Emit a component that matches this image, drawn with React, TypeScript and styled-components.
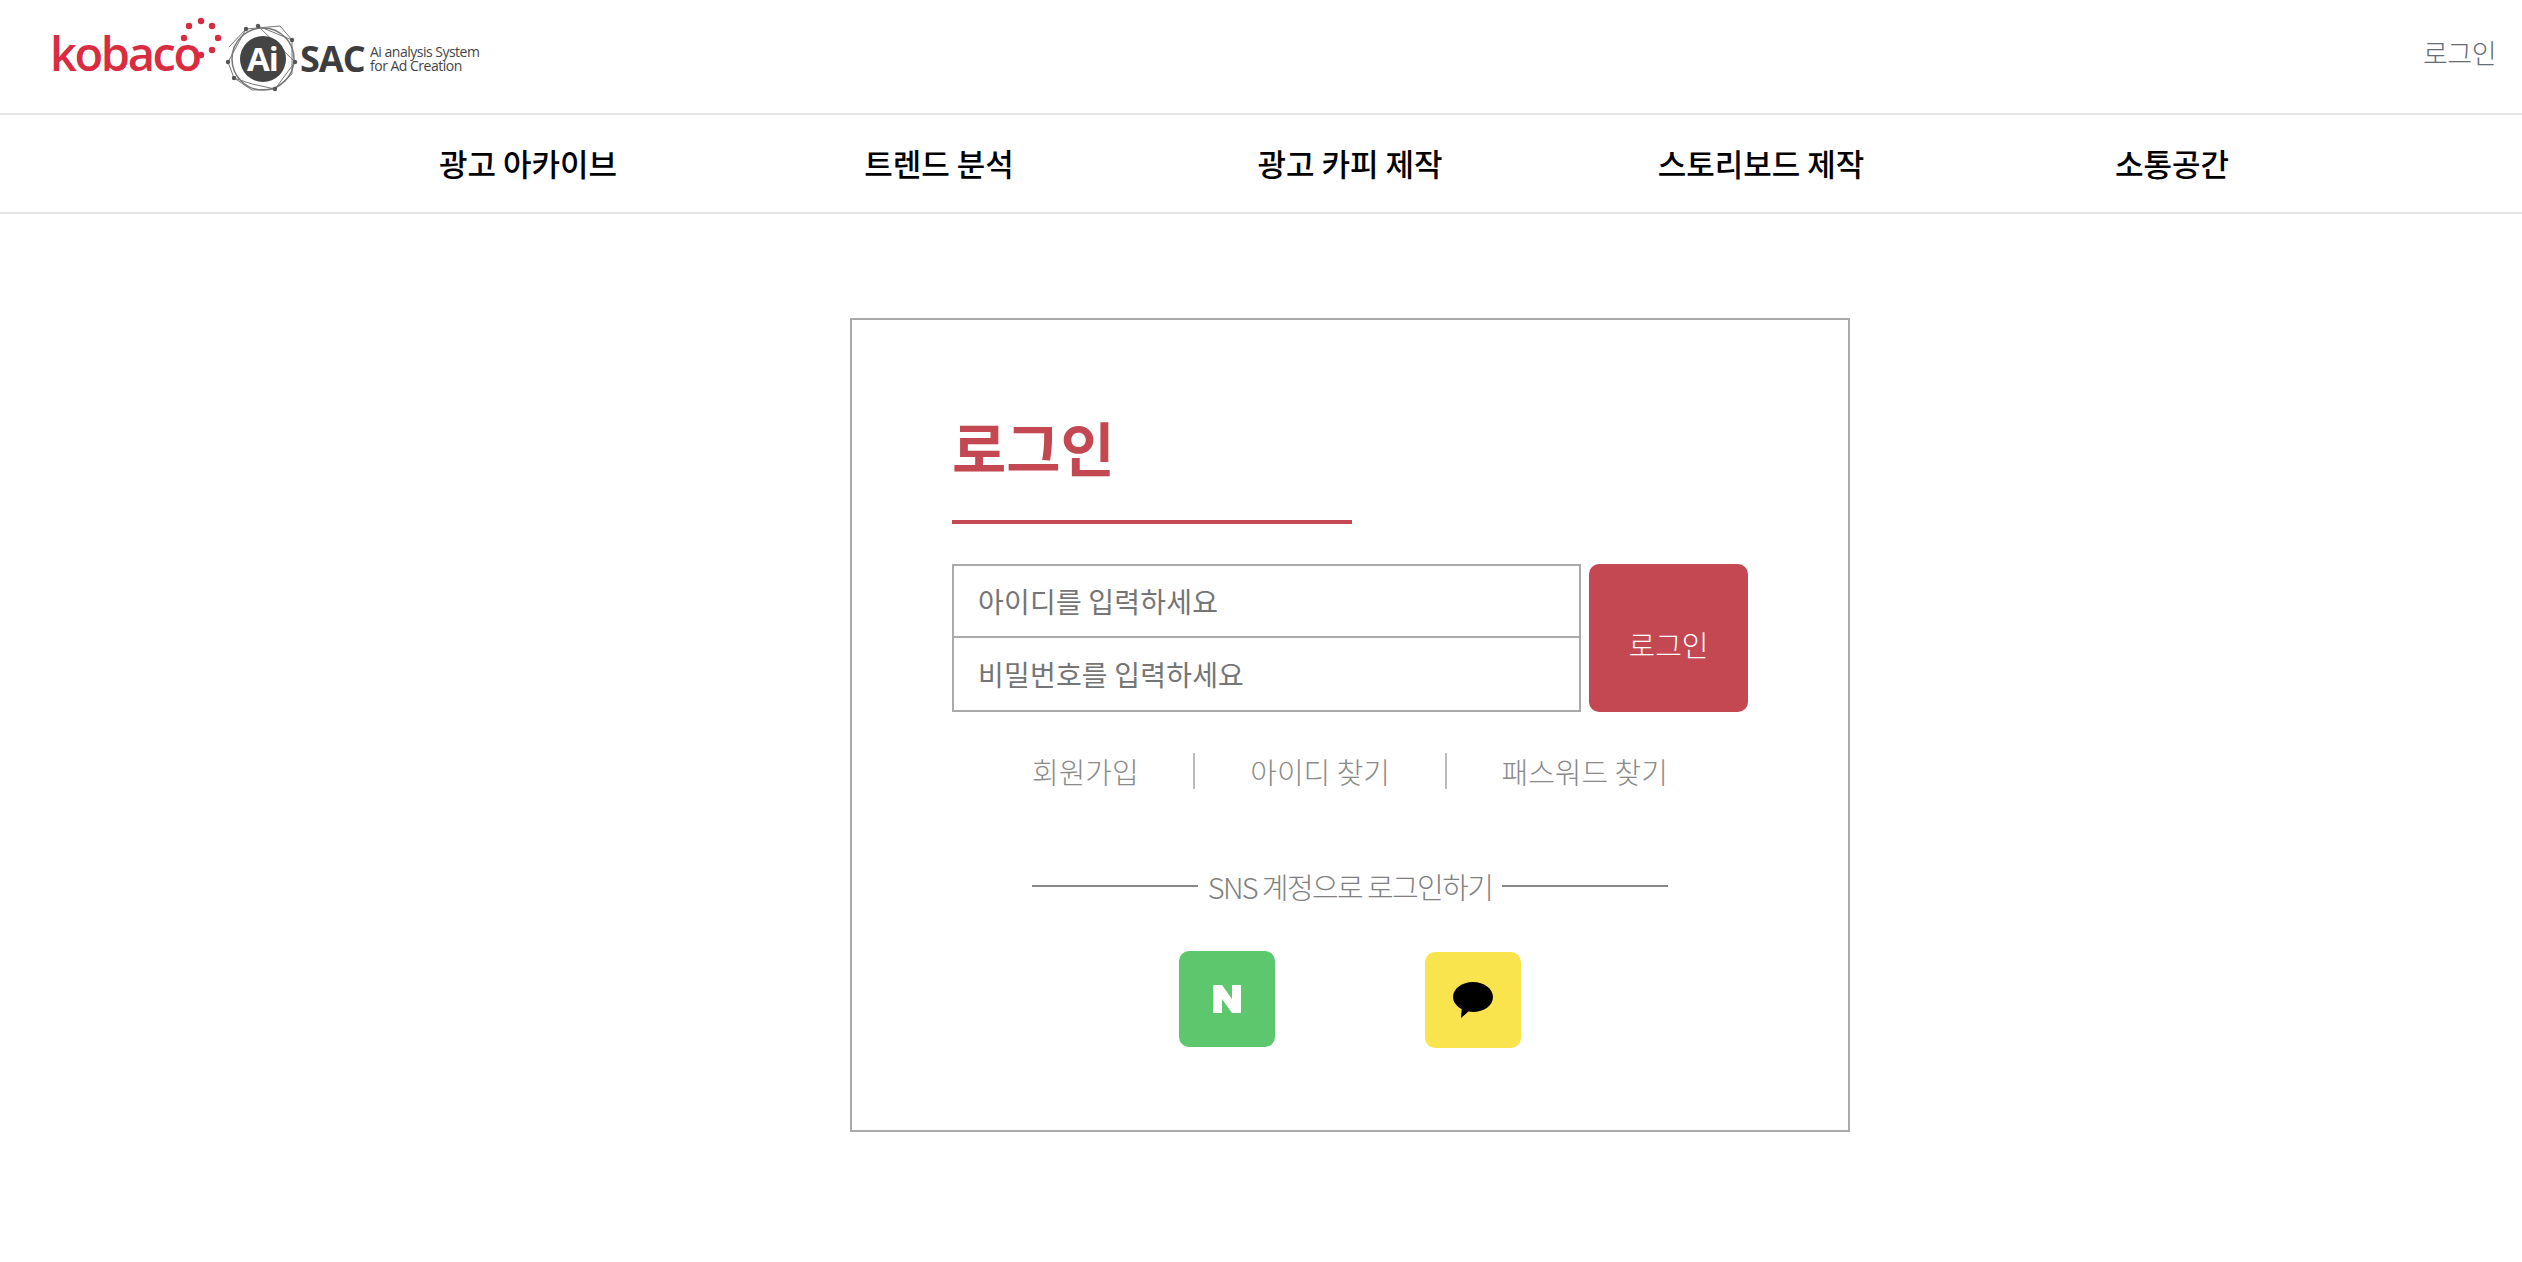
import React from 'react';
import styled, { createGlobalStyle } from 'styled-components';

const GlobalStyle = createGlobalStyle`
  html, body { margin: 0; padding: 0; background: #fff; }
  body { font-family: "Noto Sans CJK KR", "Noto Sans", sans-serif; }
  * { box-sizing: border-box; }
`;

const TopBar = styled.header`
  height: 115px;
  display: flex;
  align-items: center;
  justify-content: space-between;
  padding: 0 26px 0 30px;
  border-bottom: 2px solid #e6e6e6;
`;

const TopLogin = styled.a`
  font-size: 27px;
  font-weight: 300;
  letter-spacing: -0.5px;
  color: #666b76;
  margin-top: -8px;
`;

const Nav = styled.nav`
  height: 99px;
  display: flex;
  justify-content: center;
  padding: 0 0 3px 178px;
  border-bottom: 2px solid #e6e6e6;
`;

const NavList = styled.div`
  width: 2055px;
  display: grid;
  grid-template-columns: repeat(5, 1fr);
  align-items: center;
`;

const NavItem = styled.a`
  text-align: center;
  font-size: 31px;
  font-weight: 500;
  color: #000;
`;

const Main = styled.main`
  display: flex;
  justify-content: center;
  padding: 104px 0 130px 178px;
`;

const Card = styled.section`
  width: 1000px;
  height: 814px;
  border: 2px solid #aaa;
  padding: 0 100px;
`;

const Title = styled.h1`
  width: 400px;
  height: 204px;
  margin: 0;
  padding-top: 85px;
  border-bottom: 4px solid #c34852;
  font-size: 59px;
  line-height: 84px;
  font-weight: 700;
  color: #c34852;
`;

const LoginRow = styled.form`
  margin-top: 40px;
  display: flex;
  gap: 8px;
`;

const Inputs = styled.div`
  width: 629px;
  display: flex;
  flex-direction: column;
  border: 2px solid #aaa;
`;

const TextInput = styled.input<{ $last?: boolean }>`
  height: 72px;
  border: 0;
  border-bottom: ${p => (p.$last ? '0' : '2px solid #aaa')};
  padding: 0 24px;
  font: 400 28px "Noto Sans CJK KR", sans-serif;
  letter-spacing: 0.2px;
  outline: none;
  &::placeholder { color: #757575; opacity: 1; }
`;

const LoginButton = styled.button`
  width: 159px;
  height: 148px;
  border: 0;
  border-radius: 10px;
  background: #c34852;
  color: #fff;
  font: 300 29px "Noto Sans CJK KR", sans-serif;
  padding: 11px 0 0;
`;

const Links = styled.div`
  margin: 38px 0 0 80px;
  width: 636px;
  display: flex;
  align-items: center;
  justify-content: space-between;
  font-size: 29px;
  font-weight: 300;
  color: #8a8a8a;
`;

const Sep = styled.span`
  width: 2px;
  height: 36px;
  background: #bbb;
`;

const SnsRow = styled.div`
  margin: 73px 0 0 80px;
  width: 636px;
  display: flex;
  align-items: center;
  gap: 10px;
  font-size: 29px;
  font-weight: 300;
  letter-spacing: -1.6px;
  color: #808080;
  white-space: nowrap;
  &::before, &::after {
    content: '';
    flex: 1;
    height: 2px;
    background: #888;
  }
`;

const SnsIcons = styled.div`
  margin: 44px 0 0 227px;
  display: flex;
  align-items: flex-start;
  gap: 150px;
`;

const SnsButton = styled.a<{ $bg: string; $drop?: number }>`
  width: 96px;
  height: 96px;
  margin-top: ${p => p.$drop || 0}px;
  border-radius: 10px;
  background: ${p => p.$bg};
  display: flex;
  align-items: center;
  justify-content: center;
`;

const Logo = () => (
  <svg width="470" height="110" viewBox="0 0 470 110">
    <text x="20" y="69" fontFamily="Open Sans, sans-serif" fontWeight="600" fontSize="47" fill="#d92c40" letterSpacing="-2.4">kobaco</text>
    {[[159, 24], [171, 19], [182, 24], [154, 36], [188, 36], [182, 48], [171, 53]].map(([cx, cy]) => (
      <circle key={cx + '-' + cy} cx={cx} cy={cy} r="3.2" fill="#d92c40" />
    ))}
    <circle cx="233" cy="57" r="31" fill="none" stroke="#777" strokeWidth="1.5" />
    <path d="M198 60 L216 27 L199 45 M228 24 L262 38 L250 24 L216 27 M228 24 L265 60 M262 38 L262 72 L245 87 L222 82 L204 76 L198 60 M245 87 L265 60 M204 76 L222 88 L245 87" fill="none" stroke="#777" strokeWidth="1" />
    {[[198, 60], [228, 24], [216, 27], [262, 38], [245, 87], [204, 76], [265, 60]].map(([cx, cy]) => (
      <circle key={cx + '-' + cy} cx={cx} cy={cy} r="2.2" fill="#555" />
    ))}
    <circle cx="233" cy="57" r="23" fill="#444" />
    <text x="217" y="69" fontFamily="Open Sans, sans-serif" fontWeight="700" fontSize="33" fill="#fff" letterSpacing="-1">Ai</text>
    <text x="270" y="70" fontFamily="Open Sans, sans-serif" fontWeight="700" fontSize="36" fill="#3d3d3d" letterSpacing="-1">SAC</text>
    <text x="340" y="55" fontFamily="Open Sans, sans-serif" fontSize="14" fill="#444" letterSpacing="-0.5">Ai analysis System</text>
    <text x="340" y="69" fontFamily="Open Sans, sans-serif" fontSize="14" fill="#444" letterSpacing="-0.5">for Ad Creation</text>
  </svg>
);

const menus = ['광고 아카이브', '트렌드 분석', '광고 카피 제작', '스토리보드 제작', '소통공간'];

export default function App() {
  return (
    <>
      <GlobalStyle />
      <TopBar>
        <Logo />
        <TopLogin>로그인</TopLogin>
      </TopBar>
      <Nav>
        <NavList>
          {menus.map(m => <NavItem key={m}>{m}</NavItem>)}
        </NavList>
      </Nav>
      <Main>
        <Card>
          <Title>로그인</Title>
          <LoginRow>
            <Inputs>
              <TextInput placeholder="아이디를 입력하세요" />
              <TextInput $last type="password" placeholder="비밀번호를 입력하세요" />
            </Inputs>
            <LoginButton type="button">로그인</LoginButton>
          </LoginRow>
          <Links>
            <span>회원가입</span>
            <Sep />
            <span>아이디 찾기</span>
            <Sep />
            <span>패스워드 찾기</span>
          </Links>
          <SnsRow>SNS 계정으로 로그인하기</SnsRow>
          <SnsIcons>
            <SnsButton $bg="#5cc76d">
              <svg width="28" height="28" viewBox="0 0 28 28"><path d="M0 0H9L19 14V0H28V28H19L9 14V28H0Z" fill="#fff" /></svg>
            </SnsButton>
            <SnsButton $bg="#fae44d" $drop={1}>
              <svg width="40" height="36" viewBox="0 0 40 36"><path d="M20 0C31 0 40 6.7 40 15C40 23.5 31 30 20 30C18.5 30 17 29.9 15.5 29.6L8 36L8.7 27C3.4 24.3 0 20 0 15C0 6.7 9 0 20 0Z" fill="#000" /></svg>
            </SnsButton>
          </SnsIcons>
        </Card>
      </Main>
    </>
  );
}
